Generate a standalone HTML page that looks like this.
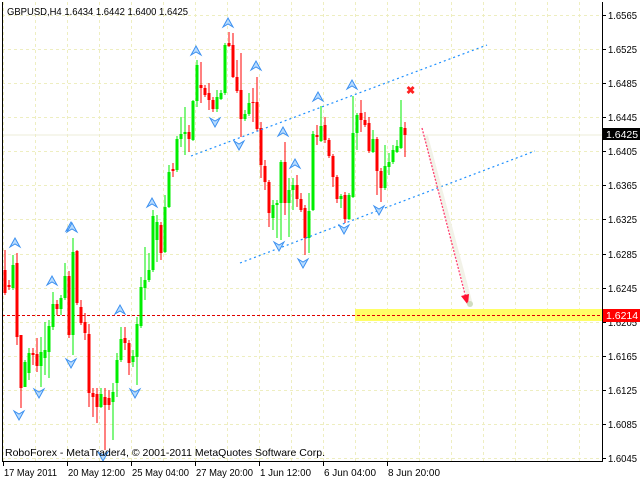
<!DOCTYPE html>
<html><head><meta charset="utf-8"><style>
html,body{margin:0;padding:0;background:#fff;width:640px;height:480px;overflow:hidden}
svg{display:block}
text{font-family:"Liberation Sans",sans-serif;font-size:10.5px;fill:#000}
</style></head><body>
<svg id="s" width="640" height="480" xmlns="http://www.w3.org/2000/svg">
<rect width="640" height="480" fill="#fff"/>
<g id="grid" stroke="#eeeec0" stroke-width="1" stroke-dasharray="3,3"></g>
<line x1="2" y1="135" x2="602" y2="135" stroke="#ececd8" stroke-width="1"/>
<rect x="355" y="309" width="247" height="12" fill="#ffff66"/>
<line x1="2" y1="315.5" x2="602" y2="315.5" stroke="#e00000" stroke-dasharray="3,2"/>
<g id="candles"></g>
<line x1="191" y1="156" x2="487" y2="45" stroke="#1e90ff" stroke-width="1.2" stroke-dasharray="2,3"/>
<line x1="240" y1="263" x2="535" y2="151" stroke="#1e90ff" stroke-width="1.2" stroke-dasharray="2,3"/>
<line x1="426" y1="136" x2="471" y2="305" stroke="#f2f2e8" stroke-width="4"/>
<line x1="422" y1="128" x2="466" y2="298" stroke="#ff4070" stroke-width="1.3" stroke-dasharray="2,1.5"/>
<polygon points="468,305 461,296 469,294" fill="#ff1030"/>
<circle cx="470" cy="304" r="3" fill="#d0dcc0"/>
<text x="406" y="94" style="fill:#ff2020;font-size:11px;font-weight:bold">✖</text>
<g id="arrows"></g>
<line x1="2.5" y1="2" x2="2.5" y2="461" stroke="#000"/>
<line x1="602.5" y1="2" x2="602.5" y2="462" stroke="#000"/>
<line x1="2" y1="461.5" x2="603" y2="461.5" stroke="#000"/>
<g id="axis"></g>
<text x="7" y="15" textLength="181" lengthAdjust="spacingAndGlyphs">GBPUSD,H4  1.6434 1.6442 1.6400 1.6425</text>
<text x="5" y="456" textLength="320" lengthAdjust="spacingAndGlyphs">RoboForex - MetaTrader4, © 2001-2011 MetaQuotes Software Corp.</text>
<rect x="603" y="128" width="37" height="12" fill="#000"/>
<text x="606" y="138" style="fill:#fff">1.6425</text>
<rect x="603" y="309" width="37" height="13" fill="#ff0000"/>
<text x="606" y="319" style="fill:#fff">1.6214</text>
</svg>
<script>
var NS="http://www.w3.org/2000/svg";
function el(p,t,a){var e=document.createElementNS(NS,t);for(var k in a)e.setAttribute(k,a[k]);document.getElementById(p).appendChild(e);return e;}
for(var x=3;x<602;x+=32)el("grid","line",{x1:x+.5,y1:2,x2:x+.5,y2:461});
var labels=["1.6565","1.6525","1.6485","1.6445","1.6405","1.6365","1.6325","1.6285","1.6245","1.6205","1.6165","1.6125","1.6085","1.6045"];
for(var i=0;i<14;i++){var y=Math.round(15+i*34.08);
 el("grid","line",{x1:2,y1:y+.5,x2:602,y2:y+.5});
 el("axis","line",{x1:602,y1:y+.5,x2:606,y2:y+.5,stroke:"#000"});
 var t=el("axis","text",{x:608,y:y+4,textLength:29,lengthAdjust:"spacingAndGlyphs"});t.textContent=labels[i];
}
var dl=["17 May 2011","20 May 12:00","25 May 04:00","27 May 20:00","1 Jun 12:00","6 Jun 04:00","8 Jun 20:00"];
var dw=[53,57,57,57,51,52,52];
for(var i=0;i<7;i++){var x=3+64*i;el("axis","line",{x1:x+.5,y1:461,x2:x+.5,y2:466,stroke:"#000"});
 var t=el("axis","text",{x:x+1,y:476,textLength:dw[i],lengthAdjust:"spacingAndGlyphs"});t.textContent=dl[i];}
var C=[[3,270,293,250,295,0],[7,285,287,280,290,0],[11,265,288,255,290,1],[15,263,337,253,345,0],[19,335,388,335,408,0],[23,362,387,360,387,1],[27,353,373,348,380,1],[31,353,355,348,365,0],[35,354,366,338,372,0],[39,352,366,337,387,1],[43,350,358,322,375,1],[47,326,352,320,378,1],[51,304,327,292,330,1],[55,304,309,300,315,0],[59,298,309,295,315,1],[63,276,298,263,300,1],[67,276,335,271,338,0],[71,252,335,238,355,1],[75,251,303,250,305,0],[79,307,323,300,325,0],[83,322,333,313,340,0],[87,334,393,324,407,0],[91,393,397,388,417,0],[95,394,407,388,423,0],[99,394,407,388,408,1],[103,397,405,388,450,0],[107,398,405,390,410,0],[111,392,402,383,440,1],[115,360,383,353,397,1],[119,339,360,327,362,1],[123,338,343,327,350,0],[127,343,363,340,375,0],[131,356,362,350,367,1],[135,324,357,317,385,1],[139,287,326,277,328,1],[143,280,288,247,300,1],[147,270,280,253,282,1],[151,216,270,210,272,1],[155,222,240,215,262,1],[159,225,253,222,260,0],[163,207,252,195,253,1],[167,172,207,165,208,1],[171,169,171,163,177,0],[175,139,170,136,172,1],[179,134,139,117,147,1],[183,132,134,107,155,1],[187,132,139,125,152,0],[191,101,140,100,141,1],[195,65,101,60,107,1],[199,85,88,62,103,0],[203,88,95,85,97,0],[207,93,100,83,110,0],[211,100,109,97,112,0],[215,97,109,90,112,1],[219,93,99,90,100,1],[223,45,93,43,95,1],[227,43,46,32,47,0],[231,45,77,33,78,0],[235,77,91,60,93,0],[239,90,119,53,137,0],[243,114,119,110,121,1],[247,103,114,93,116,1],[251,102,103,88,122,0],[255,102,129,77,131,0],[259,128,165,122,178,0],[263,166,182,160,190,0],[267,182,213,180,227,0],[271,205,218,200,230,1],[275,203,205,200,238,1],[279,162,203,160,240,1],[283,162,203,142,215,0],[287,190,203,178,237,1],[291,185,190,178,210,1],[295,185,199,175,207,0],[299,199,210,193,212,0],[303,208,238,205,255,0],[307,211,238,193,253,1],[311,134,210,131,211,1],[315,135,137,125,145,0],[319,126,141,106,142,1],[323,125,140,117,143,0],[327,140,156,138,158,0],[331,156,177,154,187,0],[335,177,199,175,203,0],[339,196,199,194,208,1],[343,195,219,192,223,0],[347,195,219,193,220,1],[351,133,197,96,198,1],[355,115,133,113,150,1],[359,113,120,100,132,0],[363,120,125,112,127,0],[367,123,151,117,153,0],[371,139,152,130,153,1],[375,139,171,137,195,0],[379,171,188,168,202,0],[383,166,188,145,190,1],[387,162,167,153,175,1],[391,150,162,145,164,1],[395,146,152,140,153,1],[399,127,148,100,149,1],[403,128,135,122,157,0]];
C.forEach(function(c){var col=c[5]?"#00ee00":"#ff0000";
 el("candles","rect",{x:c[0]+1.5,y:c[3],width:1,height:c[4]-c[3],fill:col});
 el("candles","rect",{x:c[0]+0.5,y:c[1],width:3,height:Math.max(1,c[2]-c[1]),fill:col});});
var U=[[15,243],[71,227],[52,281],[120,310],[228,23],[196,51],[256,66],[152,203],[72,228],[283,132],[295,164],[318,97],[352,85]];
var D=[[19,415],[39,393],[71,363],[135,393],[215,122],[239,145],[279,246],[303,263],[344,229],[379,210],[103,456]];
U.forEach(function(p){el("arrows","path",{d:"M"+p[0]+","+(p[1]-5)+" l5,9 l-5,-3 l-5,3 z",fill:"#b8dcff",stroke:"#3c90f0","stroke-width":"1"});});
D.forEach(function(p){el("arrows","path",{d:"M"+p[0]+","+(p[1]+5)+" l5,-9 l-5,3 l-5,-3 z",fill:"#b8dcff",stroke:"#3c90f0","stroke-width":"1"});});
</script>
</body></html>
